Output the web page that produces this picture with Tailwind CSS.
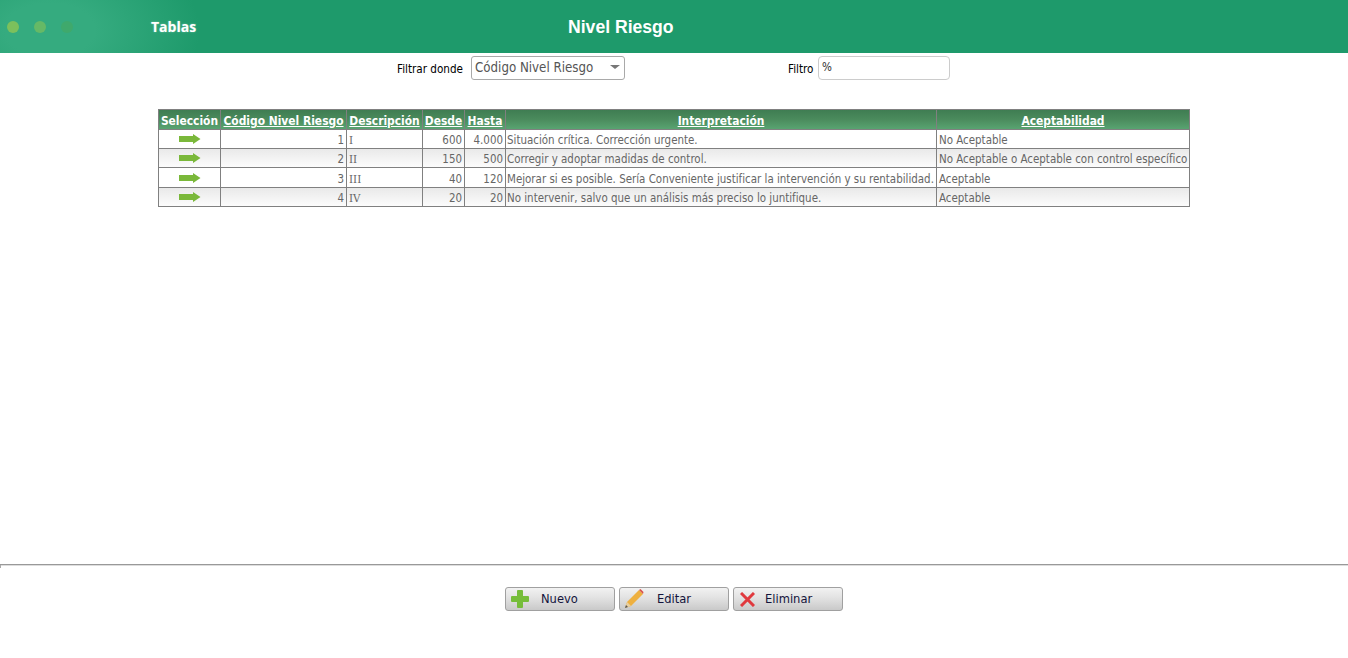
<!DOCTYPE html>
<html lang="es">
<head>
    <meta charset="UTF-8">
    <title>Nivel Riesgo</title>
    <script src="https://cdn.jsdelivr.net/npm/@tailwindcss/browser@4"></script>
</head>
<body class="bg-white h-[658px] overflow-hidden flex flex-col font-['DejaVu_Sans_Condensed','Liberation_Sans',sans-serif]">
    <!-- Encabezado -->
    <header class="h-[53px] shrink-0 flex items-center bg-[#1e9a6b] bg-[radial-gradient(ellipse_150px_90px_at_50px_30px,#35ab7f_30%,#1e9a6b_100%)]">
        <div class="w-[151px] flex items-center gap-[15px] pl-[7px] pt-[1px]">
            <span class="w-3 h-3 rounded-full bg-[#7cc05c]"></span>
            <span class="w-3 h-3 rounded-full bg-[#66b966]"></span>
            <span class="w-3 h-3 rounded-full bg-[#3fa96c]"></span>
        </div>
        <div class="w-[417px] text-white font-bold text-[14px] font-['Open_Sans',sans-serif] [text-shadow:0_0_2px_#fff6]">Tablas</div>
        <h1 class="text-white font-bold text-[17.6px] pt-[1px] font-['Liberation_Sans',sans-serif]">Nivel Riesgo</h1>
    </header>

    <!-- Filtros -->
    <div class="h-[56px] shrink-0 flex items-start pt-[3px] pl-[397px] text-[11.6px] text-black">
        <label class="mt-[5px] w-[74px]">Filtrar donde</label>
        <div class="w-[154px] h-[24px] border border-[#a9a9a9] rounded-[3px] flex items-center justify-between pl-[3px] pr-[3px] text-[13.2px] text-[#555]">
            <span>Código Nivel Riesgo</span>
            <span class="w-0 h-0 mr-[1px] mb-[2px] border-x-[5px] border-x-transparent border-t-[4px] border-t-[#777]"></span>
        </div>
        <label class="ml-[163px] mt-[5px] w-[30px]">Filtro</label>
        <div class="w-[132px] h-[24px] border border-[#ccc] rounded-[4px] flex items-center pl-[3px] text-[11.6px] text-[#333]">%</div>
    </div>

    <!-- Tabla de niveles -->
    <div class="flex-1 pl-[158px]">
        <table class="w-[1032px] table-fixed border-collapse text-[11.45px] leading-[14px] text-[#666] border border-[#808080]">
            <colgroup>
                <col class="w-[62px]"><col class="w-[126px]"><col class="w-[76px]"><col class="w-[42px]"><col class="w-[41px]"><col class="w-[431px]"><col class="w-[253px]">
            </colgroup>
            <thead>
                <tr class="h-[20px] text-white font-bold text-[11.9px] bg-[linear-gradient(#3f7d52,#4a8a5c_45%,#5aa673)] whitespace-nowrap">
                    <th class="border border-[#808080] font-bold p-0 pt-[3px]">Selección</th>
                    <th class="border border-[#808080] font-bold underline p-0 pt-[3px]">Código Nivel Riesgo</th>
                    <th class="border border-[#808080] font-bold underline p-0 pt-[3px]">Descripción</th>
                    <th class="border border-[#808080] font-bold underline p-0 pt-[3px]">Desde</th>
                    <th class="border border-[#808080] font-bold underline p-0 pt-[3px]">Hasta</th>
                    <th class="border border-[#808080] font-bold underline p-0 pt-[3px]">Interpretación</th>
                    <th class="border border-[#808080] font-bold underline p-0 pt-[3px]">Aceptabilidad</th>
                </tr>
            </thead>
            <tbody>
                <tr class="h-[19px] bg-white">
                    <td class="border border-[#808080] p-0"><svg class="mx-auto" width="22" height="12" viewBox="0 0 22 12"><path d="M0 3h14V1l7.500 5-7.500 5V9H0z" fill="#7ab83a"/></svg></td>
                    <td class="border border-[#808080] px-[2px] pt-[2px] pb-0 text-right">1</td>
                    <td class="border border-[#808080] px-[2px] pt-[2px] pb-0 font-['DejaVu_Serif_Condensed','DejaVu_Serif',serif]">I</td>
                    <td class="border border-[#808080] px-[2px] pt-[2px] pb-0 text-right">600</td>
                    <td class="border border-[#808080] px-[2px] pt-[2px] pb-0 text-right">4.000</td>
                    <td class="border border-[#808080] px-[1px] pt-[2px] pb-0 whitespace-nowrap">Situación crítica. Corrección urgente.</td>
                    <td class="border border-[#808080] px-[2px] pt-[2px] pb-0 whitespace-nowrap">No Aceptable</td>
                </tr>
                <tr class="h-[19px] bg-[linear-gradient(#e9e9e9,#fdfdfd)]">
                    <td class="border border-[#808080] p-0"><svg class="mx-auto" width="22" height="12" viewBox="0 0 22 12"><path d="M0 3h14V1l7.500 5-7.500 5V9H0z" fill="#7ab83a"/></svg></td>
                    <td class="border border-[#808080] px-[2px] pt-[2px] pb-0 text-right">2</td>
                    <td class="border border-[#808080] px-[2px] pt-[2px] pb-0 font-['DejaVu_Serif_Condensed','DejaVu_Serif',serif]">II</td>
                    <td class="border border-[#808080] px-[2px] pt-[2px] pb-0 text-right">150</td>
                    <td class="border border-[#808080] px-[2px] pt-[2px] pb-0 text-right">500</td>
                    <td class="border border-[#808080] px-[1px] pt-[2px] pb-0 whitespace-nowrap">Corregir y adoptar madidas de control.</td>
                    <td class="border border-[#808080] px-[2px] pt-[2px] pb-0 whitespace-nowrap">No Aceptable o Aceptable con control específico</td>
                </tr>
                <tr class="h-[20px] bg-white">
                    <td class="border border-[#808080] p-0"><svg class="mx-auto" width="22" height="12" viewBox="0 0 22 12"><path d="M0 3h14V1l7.500 5-7.500 5V9H0z" fill="#7ab83a"/></svg></td>
                    <td class="border border-[#808080] px-[2px] pt-[2px] pb-0 text-right">3</td>
                    <td class="border border-[#808080] px-[2px] pt-[2px] pb-0 font-['DejaVu_Serif_Condensed','DejaVu_Serif',serif]">III</td>
                    <td class="border border-[#808080] px-[2px] pt-[2px] pb-0 text-right">40</td>
                    <td class="border border-[#808080] px-[2px] pt-[2px] pb-0 text-right">120</td>
                    <td class="border border-[#808080] px-[1px] pt-[2px] pb-0 whitespace-nowrap">Mejorar si es posible. Sería Conveniente justificar la intervención y su rentabilidad.</td>
                    <td class="border border-[#808080] px-[2px] pt-[2px] pb-0 whitespace-nowrap">Aceptable</td>
                </tr>
                <tr class="h-[19px] bg-[linear-gradient(#e9e9e9,#fdfdfd)]">
                    <td class="border border-[#808080] p-0"><svg class="mx-auto" width="22" height="12" viewBox="0 0 22 12"><path d="M0 3h14V1l7.500 5-7.500 5V9H0z" fill="#7ab83a"/></svg></td>
                    <td class="border border-[#808080] px-[2px] pt-[2px] pb-0 text-right">4</td>
                    <td class="border border-[#808080] px-[2px] pt-[2px] pb-0 font-['DejaVu_Serif_Condensed','DejaVu_Serif',serif]">IV</td>
                    <td class="border border-[#808080] px-[2px] pt-[2px] pb-0 text-right">20</td>
                    <td class="border border-[#808080] px-[2px] pt-[2px] pb-0 text-right">20</td>
                    <td class="border border-[#808080] px-[1px] pt-[2px] pb-0 whitespace-nowrap">No intervenir, salvo que un análisis más preciso lo juntifique.</td>
                    <td class="border border-[#808080] px-[2px] pt-[2px] pb-0 whitespace-nowrap">Aceptable</td>
                </tr>
            </tbody>
        </table>
    </div>

    <!-- Pie con botones -->
    <footer class="relative h-[94px] shrink-0 border-t border-[#999] shadow-[inset_0_1px_0_#ddd] flex justify-center gap-1 pt-[22px] text-[12.8px] text-[#14143c]">
        <span class="absolute left-0 top-0 w-[1px] h-[3px] bg-[#aaa]"></span>
        <button class="w-[110px] h-[24px] border border-[#a0a0a0] rounded-[3px] bg-[linear-gradient(#f2f2f2,#e2e2e2_45%,#c9c9c9)] flex items-center pl-[4px]">
            <svg width="20" height="18" viewBox="0 0 20 18"><path d="M7 1q0-1 1-1h4q1 0 1 1v5h5q1 0 1 1v4q0 1-1 1h-5v5q0 1-1 1H8q-1 0-1-1v-5H2q-1 0-1-1V7q0-1 1-1h5z" fill="#76bd3a"/></svg>
            <span class="ml-[11px]">Nuevo</span>
        </button>
        <button class="w-[110px] h-[24px] border border-[#a0a0a0] rounded-[3px] bg-[linear-gradient(#f2f2f2,#e2e2e2_45%,#c9c9c9)] flex items-center pl-[4px]">
            <svg width="20" height="20" viewBox="0 0 20 20"><path d="M1 19l2-6L15 1l4 4L7 17z" fill="#eeb040"/><path d="M1 19l2-6 4 4z" fill="#e8cfa0"/><path d="M1 19l1-3 2 2z" fill="#555"/><path d="M15 1l1.500-1 3 3L19 5z" fill="#d9534f"/></svg>
            <span class="ml-[13px]">Editar</span>
        </button>
        <button class="w-[110px] h-[24px] border border-[#a0a0a0] rounded-[3px] bg-[linear-gradient(#f2f2f2,#e2e2e2_45%,#c9c9c9)] flex items-center pl-[6px]">
            <svg width="15" height="15" viewBox="0 0 15 15"><path d="M1 1l13 13M14 1L1 14" stroke="#e0393e" stroke-width="3" fill="none"/></svg>
            <span class="ml-[10px]">Eliminar</span>
        </button>
    </footer>
</body>
</html>
